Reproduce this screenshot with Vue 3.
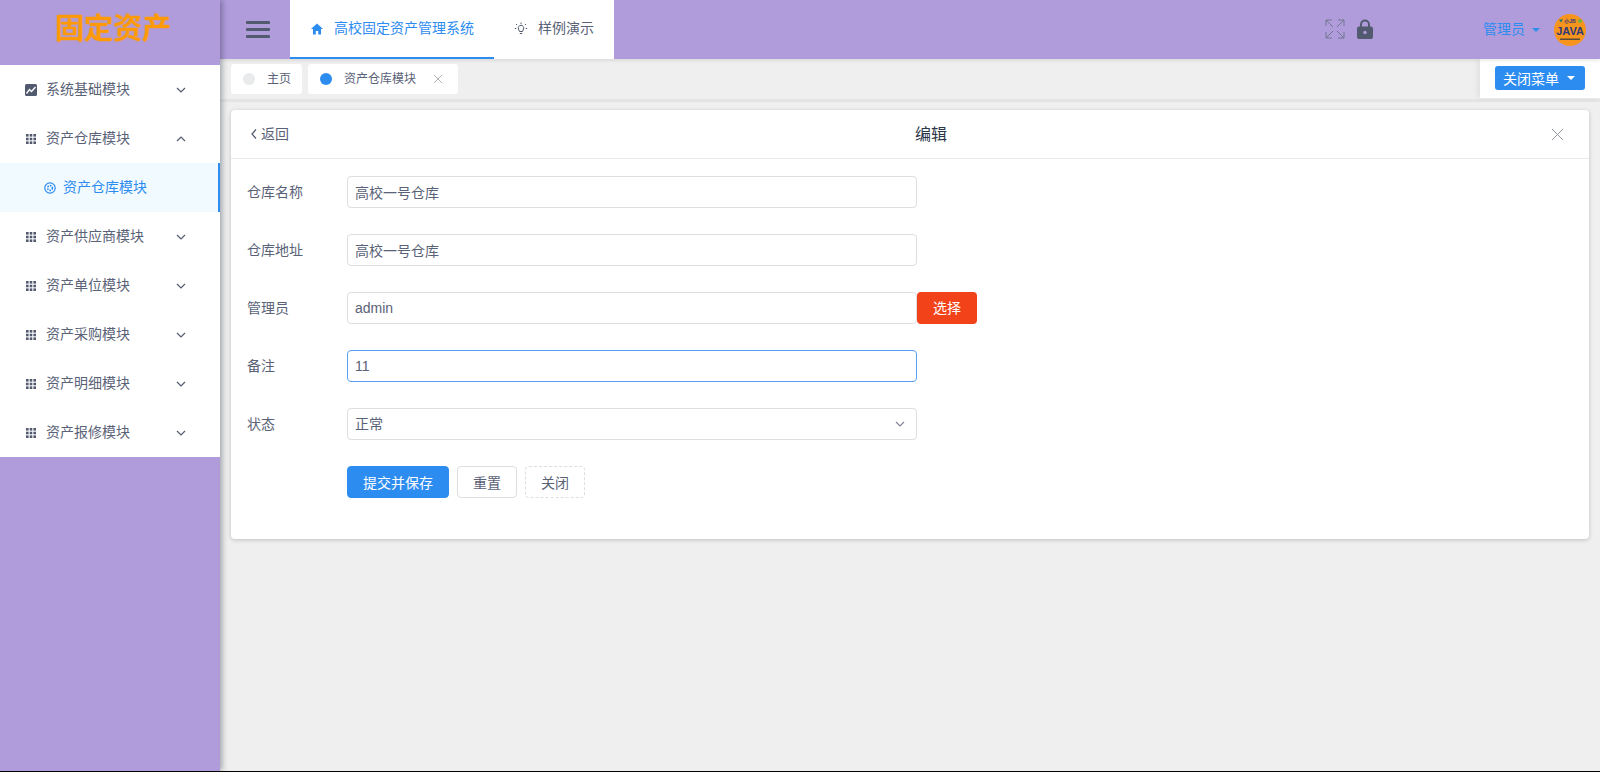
<script setup>
const menus = [
  { name: '资产仓库模块', open: true, children: ['资产仓库模块'] },
  { name: '资产供应商模块' },
  { name: '资产单位模块' },
  { name: '资产采购模块' },
  { name: '资产明细模块' },
  { name: '资产报修模块' }
]
const fields = [
  { label: '仓库名称', value: '高校一号仓库' },
  { label: '仓库地址', value: '高校一号仓库' },
  { label: '管理员', value: 'admin', pick: true },
  { label: '备注', value: '11', focus: true }
]
</script>

<template>
  <div class="page">
    <aside class="side">
      <div class="logo">固定资产</div>
      <ul class="menu">
        <li class="item">
          <svg class="ico" viewBox="0 0 12 12"><rect width="12" height="12" rx="1.5" fill="#515a6e"/><path d="M1.5 9.5 L4.5 5.5 L6.5 7.5 L10.5 3" fill="none" stroke="#fff" stroke-width="1.4"/></svg>
          <span class="txt">系统基础模块</span>
          <svg class="chev" viewBox="0 0 12 12"><path d="M2 4 L6 8 L10 4" fill="none" stroke="#515a6e" stroke-width="1.2"/></svg>
        </li>
        <template v-for="m in menus" :key="m.name">
          <li class="item">
            <svg class="ico" viewBox="0 0 12 12" fill="#515a6e">
              <rect x="1" y="1" width="2.6" height="2.6"/><rect x="4.7" y="1" width="2.6" height="2.6"/><rect x="8.4" y="1" width="2.6" height="2.6"/>
              <rect x="1" y="4.7" width="2.6" height="2.6"/><rect x="4.7" y="4.7" width="2.6" height="2.6"/><rect x="8.4" y="4.7" width="2.6" height="2.6"/>
              <rect x="1" y="8.4" width="2.6" height="2.6"/><rect x="4.7" y="8.4" width="2.6" height="2.6"/><rect x="8.4" y="8.4" width="2.6" height="2.6"/>
            </svg>
            <span class="txt">{{ m.name }}</span>
            <svg class="chev" viewBox="0 0 12 12"><path :d="m.open ? 'M2 8 L6 4 L10 8' : 'M2 4 L6 8 L10 4'" fill="none" stroke="#515a6e" stroke-width="1.2"/></svg>
          </li>
          <li v-for="c in m.children" :key="c" class="item sub">
            <svg class="ico" viewBox="0 0 12 12" fill="none" stroke="#2d8cf0"><circle cx="6" cy="6" r="5.2" stroke-width="1.2"/><circle cx="6" cy="6" r="2.4" stroke-width="1.6" stroke-dasharray="1.5 1"/></svg>
            <span class="txt">{{ c }}</span>
          </li>
        </template>
      </ul>
    </aside>

    <div class="main">
      <header class="top">
        <div class="burger"><i></i><i></i><i></i></div>
        <nav class="nav">
          <div class="nav-item active">
            <svg class="nav-ico" viewBox="0 0 14 14"><path d="M7 1.5 L13 7 H11 V12.5 H8.2 V9 H5.8 V12.5 H3 V7 H1 Z" fill="#2d8cf0"/></svg>
            <span class="txt">高校固定资产管理系统</span>
          </div>
          <div class="nav-item">
            <svg class="nav-ico" viewBox="0 0 14 14" fill="none" stroke="#515a6e" stroke-width="1"><path d="M4.5 7 a2.7 2.7 0 1 1 5 0 L8.5 9.5 H5.5 Z"/><path d="M5.8 11.5 H8.2 M7 .5 V2 M2 2 L3 3 M12 2 L11 3 M.8 6.5 H2.2 M11.8 6.5 H13.2"/></svg>
            <span class="txt">样例演示</span>
          </div>
        </nav>
        <div class="tools">
          <svg class="expand" viewBox="0 0 20 20" fill="none" stroke="#6f7690" stroke-width="1"><path d="M8 8 L1 1 M1 7 V1 H7 M12 8 L19 1 M13 1 H19 V7 M8 12 L1 19 M1 13 V19 H7 M12 12 L19 19 M13 19 H19 V13"/></svg>
          <svg class="lock" viewBox="0 0 16 20"><path d="M4 8 V5.5 a4 4 0 0 1 8 0 V8" fill="none" stroke="#515a6e" stroke-width="2"/><rect y="7.5" width="16" height="12.5" rx="2" fill="#515a6e"/><circle cx="8" cy="13.5" r="1.7" fill="#b19cdb"/></svg>
        </div>
        <div class="user">
          <span class="txt">管理员</span>
          <i class="caret"></i>
          <svg class="avatar" viewBox="0 0 32 32">
            <circle cx="16" cy="16" r="16" fill="#f7941d"/>
            <path d="M5 5.5 H9 L7 8.5 Z" fill="#1f7a6d"/>
            <circle cx="26" cy="7" r="2" fill="#7cae3a"/>
            <text x="16" y="9" text-anchor="middle" class="av1">小JB</text>
            <text x="16" y="21" text-anchor="middle" class="av2">JAVA</text>
            <rect x="6" y="24.5" width="20" height="1.5" fill="#5a4a3a"/>
          </svg>
        </div>
      </header>

      <div class="tags">
        <div class="tag">
          <i class="dot"></i><span class="txt">主页</span>
        </div>
        <div class="tag">
          <i class="dot on"></i><span class="txt">资产仓库模块</span>
          <svg class="tag-x" viewBox="0 0 8 8"><path d="M0 0 L8 8 M8 0 L0 8" stroke="#b5b5b5" stroke-width="1"/></svg>
        </div>
        <div class="close-menu">
          <div class="close-btn">关闭菜单<i class="caret white"></i></div>
        </div>
      </div>

      <div class="content">
        <section class="card">
          <div class="card-head">
            <div class="back">
              <svg viewBox="0 0 8 12"><path d="M6 1.5 L2 6 L6 10.5" fill="none" stroke="#515a6e" stroke-width="1.2"/></svg>
              <span class="txt">返回</span>
            </div>
            <div class="title">编辑</div>
            <svg class="x" viewBox="0 0 14 14"><path d="M1 1 L13 13 M13 1 L1 13" stroke="#8a8f99" stroke-width="1"/></svg>
          </div>
          <form class="form">
            <div v-for="f in fields" :key="f.label" class="row">
              <label class="txt">{{ f.label }}</label>
              <div class="box" :class="{ focus: f.focus }">{{ f.value }}</div>
              <div v-if="f.pick" class="pick"><span class="txt">选择</span></div>
            </div>
            <div class="row">
              <label class="txt">状态</label>
              <div class="box select">
                <span class="txt">正常</span>
                <svg class="chev-s" viewBox="0 0 12 12"><path d="M2 4 L6 8 L10 4" fill="none" stroke="#808695" stroke-width="1.2"/></svg>
              </div>
            </div>
            <div class="actions">
              <div class="btn primary">提交并保存</div>
              <div class="btn">重置</div>
              <div class="btn dashed">关闭</div>
            </div>
          </form>
        </section>
      </div>
    </div>
  </div>
</template>

<style>
html, body { margin: 0; background: #000; }
</style>

<style scoped>
* { box-sizing: border-box; }
.page {
  display: flex;
  width: 1600px;
  height: 771px;
  overflow: hidden;
  background: #efefef;
  color: #5a6277;
  font: 14px "Liberation Sans", "Noto Sans CJK SC", sans-serif;
}
.txt { margin-bottom: 3px; }
.side {
  position: relative;
  z-index: 3;
  width: 220px;
  flex: none;
  background: #b19cdb;
  box-shadow: 2px 0 6px rgba(0, 21, 41, .35);
}
.logo {
  height: 65px;
  padding-top: 8px;
  padding-left: 55px;
  color: #ff9a05;
  font-size: 29px;
  line-height: 42px;
  font-weight: 500;
  white-space: nowrap;
  text-shadow: 0 0 1px #ff9a05, 0 0 2px rgba(255, 154, 5, .6);
}
.menu { margin: 0; padding: 0; list-style: none; background: #fff; }
.item {
  display: flex;
  align-items: center;
  height: 49px;
  padding-left: 25px;
  padding-right: 33px;
}
.ico { width: 12px; height: 12px; margin-right: 9px; flex: none; }
.chev { width: 12px; height: 12px; margin-left: auto; }
.sub {
  padding-left: 44px;
  background: #f0faff;
  color: #2d8cf0;
  border-right: 2px solid #2d8cf0;
}
.sub .ico { margin-right: 7px; }

.main { flex: 1; min-width: 0; display: flex; flex-direction: column; }
.top {
  display: flex;
  align-items: center;
  height: 59px;
  flex: none;
  background: #b19cdb;
  padding-left: 26px;
  padding-right: 14px;
  position: relative;
  z-index: 2;
  box-shadow: 0 2px 3px rgba(0, 0, 0, .08);
}
.burger { width: 24px; display: flex; flex-direction: column; gap: 4px; margin-right: 20px; }
.burger i { display: block; height: 3px; background: #515a6e; border-radius: 1px; }
.nav { display: flex; height: 59px; background: #fff; }
.nav-item {
  display: flex;
  align-items: center;
  height: 59px;
  padding: 0 20px;
  border-bottom: 2px solid transparent;
}
.nav-item.active { color: #2d8cf0; border-bottom-color: #2d8cf0; }
.nav-ico { width: 14px; height: 14px; margin-right: 10px; }
.tools { display: flex; align-items: center; margin-left: 711px; gap: 12px; padding-bottom: 2px; }
.expand { width: 20px; height: 20px; }
.lock { width: 16px; height: 20px; }
.user { display: flex; align-items: center; margin-left: auto; color: #2d8cf0; }
.caret {
  display: block;
  width: 0;
  height: 0;
  margin-left: 7px;
  border: 4px solid transparent;
  border-top: 4px solid #2d8cf0;
  border-bottom: 0;
}
.caret.white { border-top-color: #fff; margin-left: 8px; }
.avatar { width: 32px; height: 32px; margin-left: 14px; }
.av1 { font: 700 5px "Liberation Sans", "Noto Sans CJK SC", sans-serif; fill: #2f3a7a; }
.av2 { font: 700 11px "Liberation Sans", sans-serif; fill: #2f3a7a; }

.tags {
  display: flex;
  align-items: center;
  gap: 6px;
  height: 43px;
  flex: none;
  padding: 0 0 3px 11px;
  border-bottom: 3px solid #e4e4e4;
  position: relative;
  font-size: 12px;
}
.tag {
  display: flex;
  align-items: center;
  height: 30px;
  padding: 0 11px 0 12px;
  background: #fff;
  border-radius: 3px;
  margin-top: 3px;
}
.dot { width: 12px; height: 12px; border-radius: 50%; background: #e8eaec; margin-right: 12px; }
.dot.on { background: #2d8cf0; }
.tag-x { width: 8px; height: 8px; margin-left: 18px; margin-right: 5px; }
.close-menu {
  display: flex;
  align-items: center;
  justify-content: center;
  width: 120px;
  height: 40px;
  margin-left: auto;
  background: #fff;
  box-shadow: -3px 0 6px rgba(0, 0, 0, .06);
}
.close-btn {
  display: flex;
  align-items: center;
  justify-content: center;
  width: 90px;
  height: 24px;
  padding-right: 2px;
  background: #2d8cf0;
  color: #fff;
  border-radius: 3px;
  font-size: 14px;
}
.content { padding: 8px 11px 0 11px; }
.card {
  height: 429px;
  background: #fff;
  border-radius: 4px;
  box-shadow: 0 1px 4px rgba(0, 0, 0, .2);
}
.card-head {
  display: flex;
  align-items: center;
  position: relative;
  height: 49px;
  padding: 0 25px 0 19px;
  border-bottom: 1px solid #e8eaec;
}
.back { display: flex; align-items: center; }
.back svg { width: 8px; height: 12px; margin-right: 3px; }
.title {
  flex: 1;
  margin-bottom: 3px;
  padding-left: 22px;
  text-align: center;
  font-size: 16px;
  font-weight: 400;
  color: #2b3648;
}
.x { width: 13px; height: 13px; }
.form { padding: 17px 16px 0; }
.row { display: flex; align-items: center; margin-bottom: 26px; height: 32px; }
.row label { width: 100px; flex: none; }
.box {
  display: flex;
  align-items: center;
  width: 570px;
  height: 32px;
  padding: 0 7px;
  background: #fff;
  border: 1px solid #dcdee2;
  border-radius: 4px;
}
.box.focus { border-color: #57a3f3; }
.select { justify-content: space-between; padding-right: 10px; }
.chev-s { width: 12px; height: 12px; }
.pick {
  display: flex;
  align-items: center;
  justify-content: center;
  width: 60px;
  height: 32px;
  background: #f1421a;
  color: #fff;
  border-radius: 4px;
}
.actions { display: flex; gap: 8px; padding-left: 100px; }
.btn {
  display: flex;
  align-items: center;
  justify-content: center;
  width: 60px;
  height: 32px;
  border: 1px solid #dcdee2;
  border-radius: 4px;
  background: #fff;
}
.btn.primary { width: 102px; background: #2d8cf0; border-color: #2d8cf0; color: #fff; }
.btn.dashed { border-style: dashed; }
</style>
